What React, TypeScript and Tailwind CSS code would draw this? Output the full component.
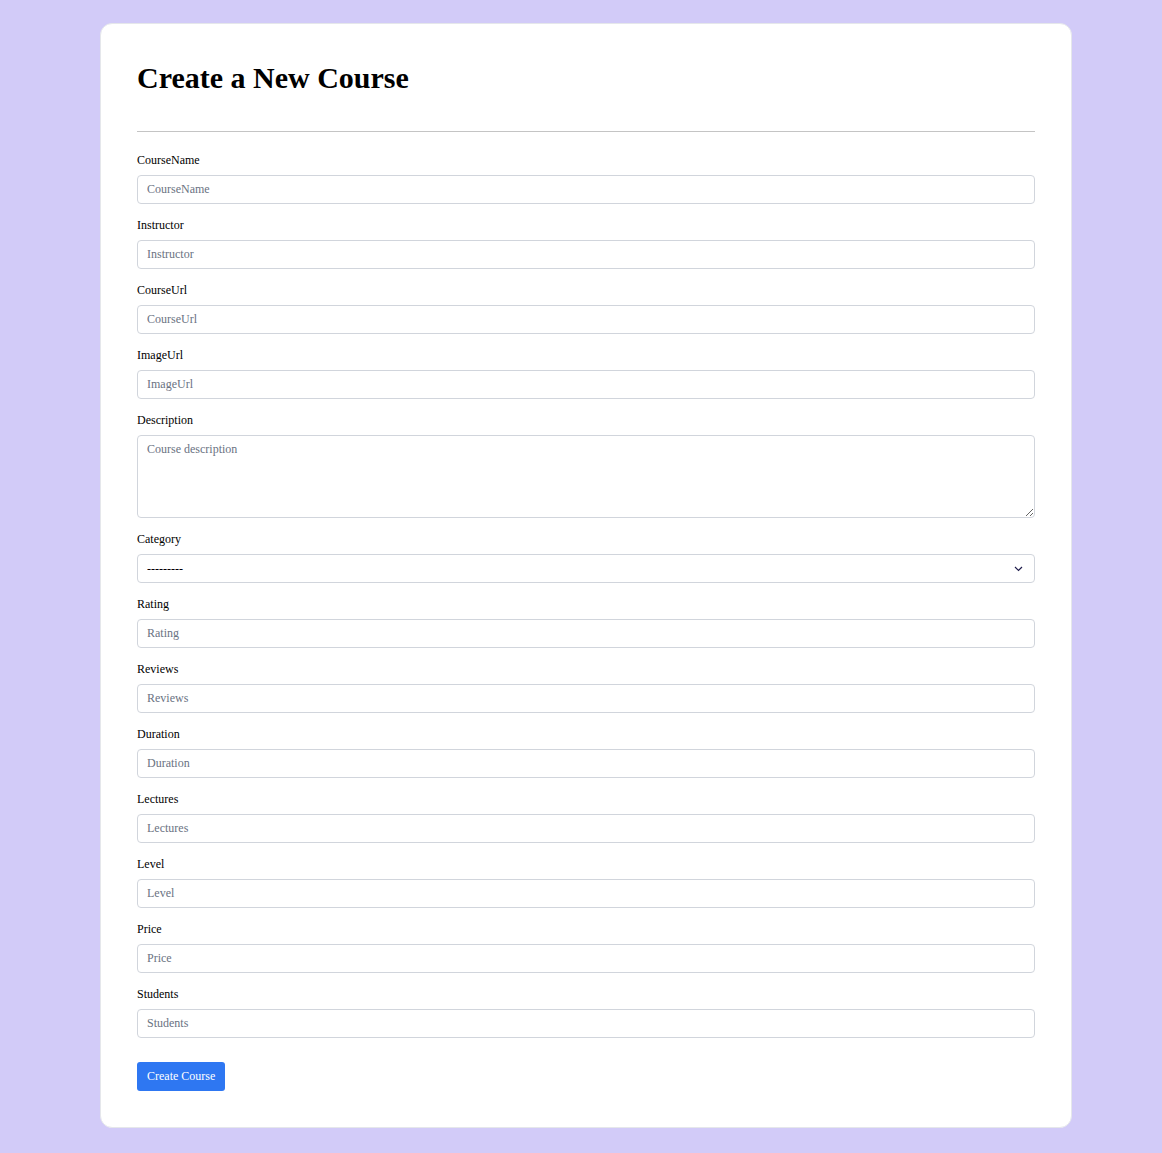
const fields = [
  "CourseName",
  "Instructor",
  "CourseUrl",
  "ImageUrl",
];

const moreFields = ["Rating", "Reviews", "Duration", "Lectures", "Level", "Price", "Students"];

const inputCls =
  "block w-full h-[29px] px-[9px] border border-gray-300 rounded text-xs text-black bg-white placeholder:text-gray-500 focus:outline-none";

function Field({ name }: { name: string }) {
  return (
    <div>
      <label className="block text-xs leading-4 mb-[7px]">{name}</label>
      <input className={inputCls} placeholder={name} type="text" />
    </div>
  );
}

export default function App() {
  return (
    <div
      className="min-h-[1153px] bg-[#d2cbf8] pl-[100px] pt-[23px] pb-[26px]"
      style={{ fontFamily: '"Liberation Serif", "Times New Roman", serif' }}
    >
      <div className="w-[972px] bg-white border border-gray-200 rounded-xl p-9 text-black">
        <h1 className="text-3xl font-bold leading-9 mb-[35px]">Create a New Course</h1>
        <hr className="border-0 border-t border-[#c4c4c4] mb-5" />

        <form className="flex flex-col gap-[13px]" onSubmit={(e) => e.preventDefault()}>
          {fields.map((f) => (
            <Field key={f} name={f} />
          ))}

          <div>
            <label className="block text-xs leading-4 mb-[7px]">Description</label>
            <textarea
              className="block w-full h-[83px] px-[9px] py-[5px] border border-gray-300 rounded text-xs bg-white placeholder:text-gray-500 focus:outline-none"
              placeholder="Course description"
            />
          </div>

          <div>
            <label className="block text-xs leading-4 mb-[7px]">Category</label>
            <div className="relative">
              <select className="block w-full h-[29px] pl-[9px] pr-8 border border-gray-300 rounded text-xs bg-white appearance-none focus:outline-none">
                <option>---------</option>
              </select>
              {/* chevron for the native-less select */}
              <svg
                className="absolute right-[12px] top-[12px] pointer-events-none"
                width="9"
                height="6"
                viewBox="0 0 9 6"
                fill="none"
              >
                <path d="M1 1l3.5 3.5L8 1" stroke="#1e1b4b" strokeWidth="1.2" />
              </svg>
            </div>
          </div>

          {moreFields.map((f) => (
            <Field key={f} name={f} />
          ))}

          <div className="pt-[11px]">
            <button
              className="h-[29px] px-[10px] pb-px bg-[#2e77f2] text-white text-xs rounded-[3px]"
              type="submit"
            >
              Create Course
            </button>
          </div>
        </form>
      </div>
    </div>
  );
}
